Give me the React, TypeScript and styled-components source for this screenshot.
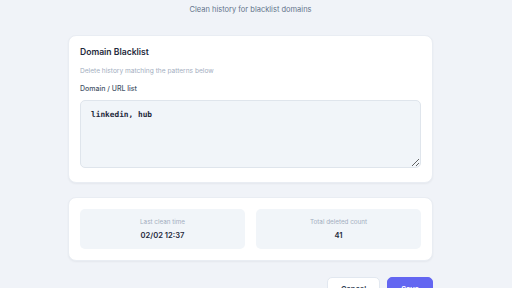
import React from 'react'
import styled, { createGlobalStyle } from 'styled-components'

const GlobalStyle = createGlobalStyle`
    html, body {
        margin: 0;
        padding: 0;
        background: #f0f3f8;
        font-family: Inter, "Noto Sans", sans-serif;
        overflow: hidden;
    }
`

const Page = styled.div`
    width: 501px;
    padding-top: 5px;
`

const Container = styled.div`
    width: 365px;
    margin: 0 auto;
    display: flex;
    flex-direction: column;
`

const Subtitle = styled.div`
    text-align: center;
    color: #64748b;
    font-size: 7.5px;
    line-height: 10px;
    margin-bottom: 20px;
`

const Card = styled.section<{ $pad?: string }>`
    background: #ffffff;
    border-radius: 8px;
    box-shadow: 0 1px 2px rgba(15, 23, 42, 0.05);
    border: 1px solid #e9edf3;
    padding: ${({ $pad }) => $pad || '11px'};
    margin-bottom: 14px;
`

const CardTitle = styled.h2`
    margin: 0;
    font-size: 8.6px;
    line-height: 10px;
    font-weight: 600;
    color: #1e293b;
`

const Description = styled.p`
    margin: 9.5px 0 0;
    font-size: 6.6px;
    line-height: 9px;
    color: #a3aec0;
`

const Label = styled.label`
    display: block;
    margin-top: 8.5px;
    font-size: 7px;
    line-height: 10px;
    font-weight: 500;
    color: #475569;
`

const TextArea = styled.textarea`
    display: block;
    box-sizing: border-box;
    width: 100%;
    height: 68px;
    margin-top: 6px;
    padding: 8px 10px;
    background: #f1f5f9;
    border: 1px solid #dfe5ec;
    border-radius: 5px;
    font-family: "DejaVu Sans Mono", "Liberation Mono", monospace;
    font-size: 7.8px;
    line-height: 12px;
    font-weight: 600;
    color: #1e293b;
    outline: none;
`

const StatsGrid = styled.div`
    display: grid;
    grid-template-columns: 1fr 1fr;
    gap: 11px;
`

const StatBox = styled.div`
    background: #f1f5f9;
    border-radius: 5px;
    height: 40px;
    display: flex;
    flex-direction: column;
    align-items: center;
    justify-content: center;
    gap: 5px;
`

const StatLabel = styled.div`
    font-size: 6.3px;
    line-height: 8px;
    color: #a3aec0;
`

const StatValue = styled.div`
    font-size: 7.6px;
    line-height: 10px;
    font-weight: 600;
    color: #1e293b;
`

const Actions = styled.div`
    display: flex;
    justify-content: flex-end;
    gap: 7px;
    margin-top: 2px;
`

const Button = styled.button<{ $primary?: boolean }>`
    height: 24px;
    padding: 0 13px;
    border-radius: 5px;
    font-family: inherit;
    font-size: 7.5px;
    font-weight: 600;
    border: 1px solid ${({ $primary }) => ($primary ? '#6366f1' : '#e2e8f0')};
    background: ${({ $primary }) => ($primary ? '#6366f1' : '#ffffff')};
    color: ${({ $primary }) => ($primary ? '#ffffff' : '#334155')};
`

const App = () => {
    return (
        <>
            <GlobalStyle />
            <Page>
                <Container>
                    <Subtitle>Clean history for blacklist domains</Subtitle>
                    <Card $pad="11px 11px 14px">
                        <CardTitle>Domain Blacklist</CardTitle>
                        <Description>Delete history matching the patterns below</Description>
                        <Label>Domain / URL list</Label>
                        <TextArea defaultValue="linkedin, hub" spellCheck={false} />
                    </Card>
                    <Card>
                        <StatsGrid>
                            <StatBox>
                                <StatLabel>Last clean time</StatLabel>
                                <StatValue>02/02 12:37</StatValue>
                            </StatBox>
                            <StatBox>
                                <StatLabel>Total deleted count</StatLabel>
                                <StatValue>41</StatValue>
                            </StatBox>
                        </StatsGrid>
                    </Card>
                    <Actions>
                        <Button>Cancel</Button>
                        <Button $primary>Save</Button>
                    </Actions>
                </Container>
            </Page>
        </>
    )
}

export default App
